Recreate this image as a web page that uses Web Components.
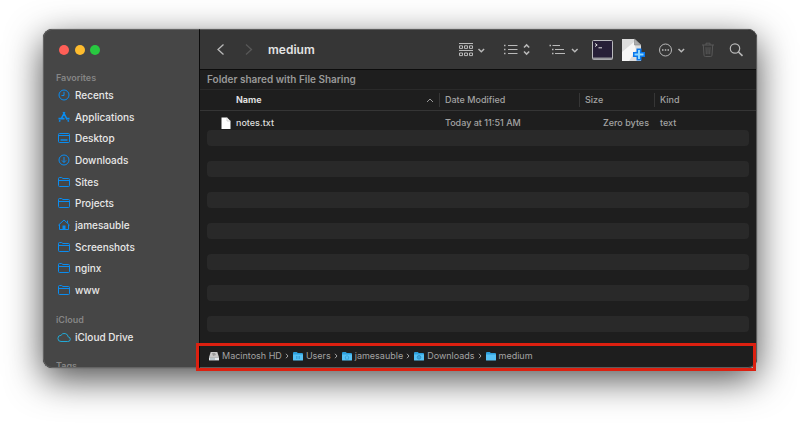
<!DOCTYPE html>
<html lang="en">
<head>
<meta charset="utf-8">
<title>medium</title>
<style>
  body {
    margin: 0;
    padding: 29px 43px 56px;
    min-height: 100vh;
    box-sizing: border-box;
    background: #fff;
    font-family: Inter, "Liberation Sans", sans-serif;
    overflow: hidden;
  }
</style>
</head>
<body>
<finder-window>
  <finder-sidebar slot="sidebar">
    <side-group heading="Favorites">
      <side-item icon="clock">Recents</side-item>
      <side-item icon="apps">Applications</side-item>
      <side-item icon="desktop">Desktop</side-item>
      <side-item icon="download">Downloads</side-item>
      <side-item icon="folder">Sites</side-item>
      <side-item icon="folder">Projects</side-item>
      <side-item icon="home">jamesauble</side-item>
      <side-item icon="folder">Screenshots</side-item>
      <side-item icon="folder">nginx</side-item>
      <side-item icon="folder">www</side-item>
    </side-group>
    <side-group heading="iCloud">
      <side-item icon="cloud">iCloud Drive</side-item>
    </side-group>
    <side-group heading="Tags"></side-group>
  </finder-sidebar>
  <finder-toolbar>medium</finder-toolbar>
  <share-banner>Folder shared with File Sharing</share-banner>
  <file-list></file-list>
  <path-bar>
    <path-item icon="disk">Macintosh HD</path-item>
    <path-item icon="users">Users</path-item>
    <path-item icon="home">jamesauble</path-item>
    <path-item icon="downloads">Downloads</path-item>
    <path-item icon="plain" last>medium</path-item>
  </path-bar>
</finder-window>

<script>
const sideIcons = {
  clock: '<circle cx="7" cy="7" r="5"/><path d="M7 3.800V7.500H4.500"/>',
  apps: '<path d="M7.800 2.200 4 9.200M6.200 2.200 10.200 9.600M1.500 8.600h6M9.600 8.600h2.900M3.200 10.200l-.9 1.400M10.800 10.200l.9 1.400" stroke-width="1.600"/>',
  desktop: '<rect x="1.500" y="2.500" width="11" height="9" rx="1"/><path d="M1.500 4.500h11"/><path d="M3.500 9h7" stroke-width="1.600"/>',
  download: '<circle cx="7" cy="7" r="5"/><path d="M7 4v5.400M4.900 7.400 7 9.500l2.100-2.100"/>',
  folder: '<path d="M1.500 10.500V3.500q0-1 1-1h2.200l1.200 1h5.600q1 0 1 1v6q0 1-1 1h-9q-1 0-1-1zM1.500 5.500h11"/>',
  home: '<path d="M1.400 7.200 7 2l5.600 5.200M2.500 6.500v5h9v-5M10.500 2.600v2.200"/><path d="M5.500 7.600h3v4.300h-3z" fill="currentColor" stroke="none"/>',
  cloud: '<path d="M4 11.500h6.700a2.300 2.300 0 0 0 .5-4.600A3.900 3.900 0 0 0 4 5.300a3.100 3.100 0 0 0 0 6.200z"/>'
};

const folderShape = '<path d="M0 2.200Q0 1 1 1h2.800l1 1H9q1 0 1 1v6H0z" fill="#2c9fdc"/><path d="M0 3.400h10V9q0 .6-.6.6H.6Q0 9.600 0 9z" fill="#56c1f4"/>';
const pathIcons = {
  disk: '<path d="M1.700 1h6.600L10 6.600H0z" fill="#c9c9c9"/><path d="M3 2h3l1 2-3 1z" fill="#9b9b9b"/><path d="M0 6.400h10v3H0z" fill="#e3e7ea"/><path d="M1 8h5" stroke="#8fa3ad"/>',
  users: folderShape + '<path d="M3 5h1.500v3H3zM5.500 5H7v3H5.500z" fill="#3ba5db"/>',
  home: folderShape + '<path d="M2.800 6.300 5 4.500l2.200 1.800M3.500 6v2.200h3V6" stroke="#3ba5db" fill="none"/>',
  downloads: folderShape + '<circle cx="5" cy="6.300" r="1.800" fill="#3ba5db" stroke="#2f91c6"/>',
  plain: folderShape
};

// small drop-down arrow shared by the toolbar buttons
const arrow = x => `<path d="M${x} 11l2.800 2.700L${x + 5.6} 11" stroke-width="1.500"/>`;

const toolIcons = [
  ['Group items', 36, '<path d="M5 5.500h14M5 12.500h14"/><path d="M5.500 7.800h3v2.600h-3zM10.500 7.800h3v2.600h-3zM15.500 7.800h3v2.600h-3zM5.500 15h3v2.600h-3zM10.500 15h3v2.600h-3zM15.500 15h3v2.600h-3z"/>' + arrow(24.5)],
  ['View as list', 36, '<path d="M9 7.500h9.500M9 11.500h9.500M9 15.500h9.500"/><path d="M5 7.500h1.500M5 11.500h1.500M5 15.500h1.500" stroke-width="1.500"/><path d="M25 9.500l2.600-2.600 2.600 2.600M25 13.500l2.600 2.600 2.600-2.600" stroke-width="1.500"/>'],
  ['Sort items', 39, '<path d="M8.500 7.500h7.500M11 11.500h9M11 15.500h10"/><path d="M5.500 7.500H7M8 11.500h1.500M8 15.500h1.500" stroke-width="1.500"/>' + arrow(28)],
  ['Open Terminal', 21, '<rect x=".5" y="2.500" width="20" height="19" rx="1" fill="#271f38" stroke="#b9b9bd"/><path d="M1 20.500h19" stroke="#96969b" stroke-width="2"/><path d="M3 5.500l2.200 1.500L3 8.500M6.500 9.800h3.500" stroke="#ddd"/>'],
  ['New file', 23, '<path d="M0 1h12.500L19 7v16H0z" fill="#dcdcdc" stroke="none"/><path d="M0 14 12 4l2 8-7 11H0z" fill="#f6f6f6" stroke="none"/><path d="M12.500 1v6H19z" fill="#aaa" stroke="#888" stroke-width=".6"/><path d="M17 10.500v12M11 16.500h12" stroke="#0877ec" stroke-width="5"/><path d="M17 12v9M12.500 16.500h9" stroke="#8cd6ff" stroke-width="2"/>'],
  ['Actions', 36, '<circle cx="11.500" cy="12" r="6"/><path d="M8 12h1.500M10.800 12h1.500M13.500 12H15" stroke-width="1.700"/>' + arrow(24.5)],
  ['Move to Trash', 18, '<path d="M3 7h12M7 7V5.200h4V7M4.300 7l.7 10.200q.1 1.300 1.300 1.300h5.400q1.200 0 1.300-1.300L13.700 7M7 9.200l.3 7M9 9.200v7M11 9.200l-.3 7"/>', 'off'],
  ['Search', 21, '<circle cx="9" cy="10.500" r="4.700" stroke-width="1.200"/><path d="M12.500 14l4 3.800" stroke-width="1.600"/>']
];

class FinderWindow extends HTMLElement {
  constructor() {
    super();
    this.attachShadow({ mode: 'open' });
    this.shadowRoot.innerHTML = `
      <style>
        :host {
          display: grid;
          grid-template-columns: 156px 1fr;
          height: calc(100vh - 85px);
          box-sizing: border-box;
          border-radius: 9px;
          background: #1e1e1e;
          box-shadow: 0 0 1px rgba(0, 0, 0, 0.6), 0 11px 36px rgba(0, 0, 0, 0.7);
        }

        ::slotted([slot="sidebar"]) {
          border-radius: 9px 0 0 9px;
        }

        main {
          display: flex;
          flex-direction: column;
          min-width: 0;
          min-height: 0;
          border: 1px solid #5c5c5c;
          border-left-color: #0c0c0c;
          border-radius: 0 9px 9px 0;
        }
      </style>
      <slot name="sidebar"></slot>
      <main><slot></slot></main>
    `;
  }
}

class FinderSidebar extends HTMLElement {
  constructor() {
    super();
    this.attachShadow({ mode: 'open' });
    this.shadowRoot.innerHTML = `
      <style>
        :host {
          display: block;
          min-height: 0;
          box-sizing: border-box;
          overflow: hidden;
          background: #464646;
          border: 1px solid #646464;
          border-right: 0;
        }

        .lights {
          display: flex;
          justify-content: space-between;
          width: 41px;
          padding: 15px 15px 16px;
        }

        button {
          width: 10px;
          height: 10px;
          padding: 0;
          border: 0;
          border-radius: 50%;
        }

        .close { background: #ff5f57; }
        .minimize { background: #febc2e; }
        .zoom { background: #28c840; }
      </style>
      <div class="lights">
        <button class="close" aria-label="Close"></button>
        <button class="minimize" aria-label="Minimize"></button>
        <button class="zoom" aria-label="Zoom"></button>
      </div>
      <nav><slot></slot></nav>
    `;
  }
}

class SideGroup extends HTMLElement {
  constructor() {
    super();
    this.attachShadow({ mode: 'open' });
    this.shadowRoot.innerHTML = `
      <style>
        :host {
          display: block;
          margin-bottom: 12px;
        }

        h2 {
          margin: 0;
          padding-left: 12px;
          font-size: 9px;
          font-weight: 600;
          line-height: 13px;
          color: #858585;
        }

        .items {
          display: grid;
          grid-auto-rows: 1fr;
        }

        :host([heading="Favorites"]) .items {
          height: 217px;
        }
      </style>
      <h2>${this.getAttribute('heading')}</h2>
      <div class="items"><slot></slot></div>
    `;
  }
}

class SideItem extends HTMLElement {
  constructor() {
    super();
    const icon = this.getAttribute('icon');
    this.attachShadow({ mode: 'open' });
    this.shadowRoot.innerHTML = `
      <style>
        :host {
          display: block;
        }

        a {
          display: flex;
          align-items: center;
          gap: 4px;
          height: 100%;
          min-height: 21px;
          padding-left: 13px;
          font-size: 10px;
          font-weight: 500;
          line-height: 14px;
          color: #e8e8e8;
          text-decoration: none;
        }

        svg {
          color: ${icon === 'cloud' ? '#22a9d6' : '#0a8cf0'};
          fill: none;
          stroke: currentColor;
        }
      </style>
      <a href="#"><svg width="14" height="14" viewBox="0 0 14 14">${sideIcons[icon]}</svg><slot></slot></a>
    `;
  }
}

class FinderToolbar extends HTMLElement {
  constructor() {
    super();
    this.attachShadow({ mode: 'open' });
    this.shadowRoot.innerHTML = `
      <style>
        :host {
          display: flex;
          align-items: center;
          flex: none;
          height: 39px;
          padding: 0 9px 0 14px;
          background: #363636;
          border-bottom: 1px solid #0c0c0c;
          border-radius: 0 8px 0 0;
        }

        button {
          display: block;
          padding: 0;
          border: 0;
          background: none;
          color: #b9b9b9;
        }

        button.off {
          color: #585858;
        }

        svg {
          display: block;
          fill: none;
          stroke: currentColor;
        }

        .history {
          display: flex;
          gap: 14px;
        }

        h1 {
          flex: 1;
          margin: 0 0 0 12px;
          font-size: 12px;
          font-weight: 600;
          line-height: 16px;
          color: #e4e4e4;
        }

        .tools {
          display: flex;
          gap: 9px;
        }
      </style>
      <div class="history">
        <button aria-label="Back"><svg width="14" height="24" viewBox="0 0 14 24"><path d="M9.500 6.500 4 11.500l5.500 5" stroke-width="1.300"/></svg></button>
        <button aria-label="Forward" class="off"><svg width="14" height="24" viewBox="0 0 14 24"><path d="M4 6.500l5.500 5-5.500 5" stroke-width="1.300"/></svg></button>
      </div>
      <h1><slot></slot></h1>
      <div class="tools">${this.renderTools()}</div>
    `;
  }

  renderTools() {
    return toolIcons.map(([label, width, shapes, state]) => `
      <button aria-label="${label}" class="${state || ''}">
        <svg width="${width}" height="24" viewBox="0 0 ${width} 24">${shapes}</svg>
      </button>`).join('');
  }
}

class ShareBanner extends HTMLElement {
  constructor() {
    super();
    this.attachShadow({ mode: 'open' });
    this.shadowRoot.innerHTML = `
      <style>
        :host {
          display: block;
          flex: none;
          padding-left: 7px;
          font-size: 10px;
          font-weight: 600;
          line-height: 19px;
          color: #999;
          border-bottom: 1px solid #2a2a2a;
        }
      </style>
      <slot></slot>
    `;
  }
}

class FileList extends HTMLElement {
  constructor() {
    super();
    this.attachShadow({ mode: 'open' });
    this.shadowRoot.innerHTML = this.getTemplate();
    this.renderStripes();
  }

  // empty rows under the last file
  renderStripes() {
    const stripes = this.shadowRoot.querySelector('.stripes');
    for (let i = 0; i < 7; i++) {
      stripes.appendChild(document.createElement('div'));
    }
  }

  getTemplate() {
    return `
      <style>
        :host {
          display: block;
          flex: 1;
          min-height: 0;
          overflow: hidden;
        }

        table {
          width: 100%;
          table-layout: fixed;
          border-collapse: separate;
          border-spacing: 0;
          font-size: 9px;
          line-height: 12px;
          color: #a3a3a3;
        }

        th, td {
          padding: 0 5px;
          font-weight: 500;
          text-align: left;
          white-space: nowrap;
        }

        th {
          height: 20px;
          border-bottom: 1px solid #353535;
          background: linear-gradient(#363636, #363636) left center / 1px 14px no-repeat;
        }

        td {
          height: 19px;
          padding-top: 4px;
          box-sizing: border-box;
        }

        th:first-child {
          padding-left: 36px;
          background: none;
          font-weight: 700;
          color: #dedede;
        }

        td:first-child {
          padding-left: 20px;
          color: #dedede;
        }

        th:not(:first-child), td:not(:first-child) {
          padding-left: 6px;
        }

        td.size {
          text-align: right;
        }

        .date { width: 129px; }
        .size-col { width: 64px; }
        .kind { width: 91px; }

        .cell {
          display: flex;
          align-items: center;
          gap: 4px;
        }

        .sort {
          justify-content: space-between;
        }

        svg {
          fill: none;
          stroke: #999;
        }

        .stripes {
          display: grid;
          gap: 15px;
          padding: 0 7px;
        }

        .stripes div {
          height: 16px;
          border-radius: 4px;
          background: #292929;
        }
      </style>
      <table>
        <thead>
          <tr>
            <th><div class="cell sort">Name <svg width="8" height="8" viewBox="0 0 8 8"><path d="M1 6l3-3 3 3"/></svg></div></th>
            <th class="date">Date Modified</th>
            <th class="size-col">Size</th>
            <th class="kind">Kind</th>
          </tr>
        </thead>
        <tbody>
          <tr>
            <td><div class="cell"><svg width="12" height="12" viewBox="0 0 12 12"><path d="M1.500.5h5.500L10.500 4v8h-9z" fill="#fff" stroke="none"/><path d="M7 .5V4h3.500" stroke="#bbb" stroke-width=".6"/></svg>notes.txt</div></td>
            <td>Today at 11:51 AM</td>
            <td class="size">Zero bytes</td>
            <td>text</td>
          </tr>
        </tbody>
      </table>
      <div class="stripes"></div>
    `;
  }
}

class PathBar extends HTMLElement {
  constructor() {
    super();
    this.attachShadow({ mode: 'open' });
    this.shadowRoot.innerHTML = `
      <style>
        :host {
          display: flex;
          align-items: center;
          flex: none;
          position: relative;
          height: 22px;
          padding-left: 9px;
        }

        /* red frame round the whole bar, over the window edge */
        .frame {
          position: absolute;
          inset: -2px 0 -4px -4px;
          border: 3px solid #dc2010;
          pointer-events: none;
        }
      </style>
      <slot></slot>
      <div class="frame"></div>
    `;
  }
}

class PathItem extends HTMLElement {
  constructor() {
    super();
    this.attachShadow({ mode: 'open' });
    this.shadowRoot.innerHTML = `
      <style>
        :host {
          display: flex;
          align-items: center;
          font-size: 9px;
          line-height: 12px;
          color: #a3a3a3;
        }

        a {
          display: flex;
          align-items: center;
          gap: 3px;
          color: inherit;
          text-decoration: none;
        }

        .next {
          margin: 0 4px 0 3px;
          fill: none;
          stroke: #a3a3a3;
        }
      </style>
      <a href="#"><svg width="10" height="10" viewBox="0 0 10 10">${pathIcons[this.getAttribute('icon')]}</svg><slot></slot></a>
      ${this.hasAttribute('last') ? '' : '<svg class="next" width="4" height="6" viewBox="0 0 4 6"><path d="M1 .8 3 3 1 5.200"/></svg>'}
    `;
  }
}

customElements.define('finder-window', FinderWindow);
customElements.define('finder-sidebar', FinderSidebar);
customElements.define('side-group', SideGroup);
customElements.define('side-item', SideItem);
customElements.define('finder-toolbar', FinderToolbar);
customElements.define('share-banner', ShareBanner);
customElements.define('file-list', FileList);
customElements.define('path-bar', PathBar);
customElements.define('path-item', PathItem);
</script>
</body>
</html>
